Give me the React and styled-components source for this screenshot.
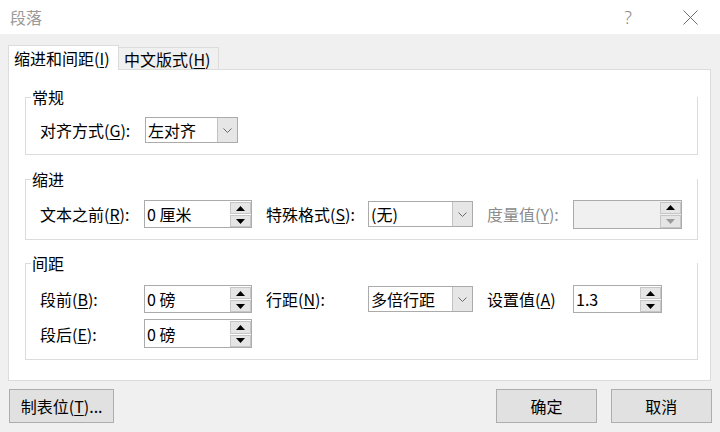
import React from 'react';
import styled, { createGlobalStyle } from 'styled-components';

const GlobalStyle = createGlobalStyle`
    html, body {
        margin: 0;
        padding: 0;
        background: #f0f0f0;
    }
    body {
        font-family: "Noto Sans CJK SC", "Noto Sans", sans-serif;
        font-size: 16px;
        color: #000;
    }
    * {
        box-sizing: border-box;
    }
`;

const Window = styled.div`
    width: 720px;
    height: 432px;
    display: flex;
    flex-direction: column;
    background: #f0f0f0;
    overflow: hidden;
`;

const TitleBar = styled.div`
    height: 34px;
    flex: none;
    display: flex;
    align-items: center;
    background: #fff;
    padding-left: 10px;
`;

const Title = styled.div`
    flex: 1;
    color: #9a9a9a;
    font-size: 16px;
    line-height: 20px;
`;

const HelpGlyph = styled.div`
    width: 14px;
    margin-right: 47px;
    color: #8a8a8a;
    font-family: "Noto Sans", sans-serif;
    font-size: 18px;
    font-weight: 300;
    line-height: 20px;
    text-align: center;
`;

const CloseGlyph = styled.div`
    width: 16px;
    height: 16px;
    margin-right: 22px;
    display: flex;
    align-items: center;
    justify-content: center;
`;

const Body = styled.div`
    flex: 1;
    display: flex;
    flex-direction: column;
    padding: 11px 8px 0 8px;
`;

const TabStrip = styled.div`
    height: 24px;
    display: flex;
    align-items: flex-end;
`;

const Tab = styled.div`
    position: relative;
    z-index: ${props => (props.$active ? 2 : 1)};
    width: ${props => props.$w}px;
    height: ${props => (props.$active ? 25 : 22)}px;
    margin-bottom: ${props => (props.$active ? -1 : 0)}px;
    padding-left: 5px;
    display: flex;
    align-items: center;
    background: ${props => (props.$active ? '#fff' : '#f0f0f0')};
    border: 1px solid #dcdcdc;
    border-bottom: none;
    border-left: ${props => (props.$active ? '1px solid #dcdcdc' : 'none')};
    font-size: 16px;
    line-height: 20px;
    white-space: nowrap;
`;

const Panel = styled.div`
    width: 703px;
    height: 312px;
    background: #fff;
    border: 1px solid #dcdcdc;
    padding: 0 12px 0 16px;
    display: flex;
    flex-direction: column;
`;

const Group = styled.div`
    margin-top: ${props => props.$top}px;
    padding: 0 0 11px 14px;
    border: 1px solid #dcdcdc;
    border-top: none;
    display: flex;
    flex-direction: column;
`;

const Legend = styled.div`
    height: 20px;
    margin: -10px 0 0 -15px;
    display: flex;
    align-items: center;
    font-size: 16px;
    line-height: 20px;

    &::before {
        content: '';
        width: 6px;
        height: 1px;
        margin-right: 1px;
        margin-top: 1px;
        background: #dcdcdc;
    }
`;

const Row = styled.div`
    margin-top: ${props => props.$top}px;
    height: ${props => props.$h}px;
    display: flex;
    align-items: center;
`;

const FieldLabel = styled.div`
    width: ${props => props.$w}px;
    margin-left: ${props => props.$gap || 0}px;
    flex: none;
    color: ${props => (props.$disabled ? '#8c8c8c' : '#000')};
    font-size: 16px;
    line-height: 20px;
    white-space: nowrap;
`;

const Key = styled.u`
    text-decoration: underline;
    text-decoration-thickness: 1px;
    text-underline-offset: 2px;
`;

const SpinBox = styled.div`
    width: ${props => props.$w}px;
    height: ${props => props.$h}px;
    flex: none;
    display: flex;
    background: ${props => (props.$disabled ? '#f0f0f0' : '#fff')};
    border: 1px solid #ababab;
`;

const FieldValue = styled.div`
    flex: 1;
    padding-left: 2px;
    display: flex;
    align-items: center;
    font-size: 16px;
    line-height: 20px;
    white-space: nowrap;
    overflow: hidden;
`;

const SpinButtons = styled.div`
    width: 21px;
    flex: none;
    display: flex;
    flex-direction: column;
    gap: 1px;
    padding: 1px 0 0 0;
`;

const SpinHalf = styled.div`
    flex: 1;
    display: flex;
    align-items: center;
    justify-content: center;
    background: #e5e5e5;
    border: 1px solid #c6c6c6;
`;

const Select = styled.div`
    width: ${props => props.$w}px;
    height: ${props => props.$h}px;
    flex: none;
    display: flex;
    background: #fff;
    border: 1px solid #ababab;
`;

const SelectArrow = styled.div`
    width: 20px;
    flex: none;
    display: flex;
    align-items: center;
    justify-content: center;
    background: #e6e6e6;
    border-left: 1px solid #c2c2c2;
`;

const Footer = styled.div`
    margin-top: 8px;
    padding-left: 1px;
    display: flex;
    gap: 14px;
`;

const Button = styled.div`
    width: ${props => props.$w}px;
    height: 34px;
    margin-right: ${props => props.$push || 0}px;
    display: flex;
    align-items: center;
    justify-content: center;
    background: #e1e1e1;
    border: 1px solid #adadad;
    font-size: 16px;
    line-height: 20px;
    white-space: nowrap;
`;

const Triangle = ({ down, color = '#000' }) => (
    <svg width="9" height="5" viewBox="0 0 9 5">
        {down
            ? <polygon points="0,0 9,0 4.5,5" fill={color} />
            : <polygon points="0,5 9,5 4.5,0" fill={color} />}
    </svg>
);

const Chevron = () => (
    <svg width="9" height="5" viewBox="0 0 9 5">
        <polyline points="0.5,0.5 4.5,4.5 8.5,0.5" fill="none" stroke="#6a6a6a" strokeWidth="1" />
    </svg>
);

const Spin = ({ value, width, height = 28, disabled }) => (
    <SpinBox $w={width} $h={height} $disabled={disabled}>
        <FieldValue>{value}</FieldValue>
        <SpinButtons>
            <SpinHalf><Triangle /></SpinHalf>
            <SpinHalf><Triangle down color={disabled ? '#9a9a9a' : '#000'} /></SpinHalf>
        </SpinButtons>
    </SpinBox>
);

const Dropdown = ({ value, width, height = 26 }) => (
    <Select $w={width} $h={height}>
        <FieldValue>{value}</FieldValue>
        <SelectArrow><Chevron /></SelectArrow>
    </Select>
);

const App = () => {
    return (
        <Window>
            <GlobalStyle />
            <TitleBar>
                <Title>段落</Title>
                <HelpGlyph>?</HelpGlyph>
                <CloseGlyph>
                    <svg width="15" height="15" viewBox="0 0 15 15">
                        <path d="M0.5 0.5 L14.5 14.5 M14.5 0.5 L0.5 14.5" stroke="#6e6e6e" strokeWidth="1" fill="none" />
                    </svg>
                </CloseGlyph>
            </TitleBar>

            <Body>
                <TabStrip>
                    <Tab $active $w={111}>缩进和间距(<Key>I</Key>)</Tab>
                    <Tab $w={100}>中文版式(<Key>H</Key>)</Tab>
                </TabStrip>

                <Panel>
                    <Group $top={27}>
                        <Legend>常规</Legend>
                        <Row $top={10} $h={26}>
                            <FieldLabel $w={105}>对齐方式(<Key>G</Key>):</FieldLabel>
                            <Dropdown value="左对齐" width={93} height={26} />
                        </Row>
                    </Group>

                    <Group $top={24}>
                        <Legend>缩进</Legend>
                        <Row $top={11} $h={28}>
                            <FieldLabel $w={104}>文本之前(<Key>R</Key>):</FieldLabel>
                            <Spin value="0 厘米" width={108} />
                            <FieldLabel $w={102} $gap={14}>特殊格式(<Key>S</Key>):</FieldLabel>
                            <Dropdown value="(无)" width={105} height={26} />
                            <FieldLabel $w={86} $gap={14} $disabled>度量值(<Key>Y</Key>):</FieldLabel>
                            <Spin value="" width={109} height={29} disabled />
                        </Row>
                    </Group>

                    <Group $top={23}>
                        <Legend>间距</Legend>
                        <Row $top={12} $h={28}>
                            <FieldLabel $w={104}>段前(<Key>B</Key>):</FieldLabel>
                            <Spin value="0 磅" width={108} />
                            <FieldLabel $w={102} $gap={14}>行距(<Key>N</Key>):</FieldLabel>
                            <Dropdown value="多倍行距" width={105} height={26} />
                            <FieldLabel $w={86} $gap={14}>设置值(<Key>A</Key>)</FieldLabel>
                            <Spin value="1.3" width={89} />
                        </Row>
                        <Row $top={6} $h={29}>
                            <FieldLabel $w={104}>段后(<Key>E</Key>):</FieldLabel>
                            <Spin value="0 磅" width={108} height={29} />
                        </Row>
                    </Group>
                </Panel>

                <Footer>
                    <Button $w={106} $push={368}>制表位(<Key>T</Key>)...</Button>
                    <Button $w={101}>确定</Button>
                    <Button $w={102}>取消</Button>
                </Footer>
            </Body>
        </Window>
    );
};

export default App;
